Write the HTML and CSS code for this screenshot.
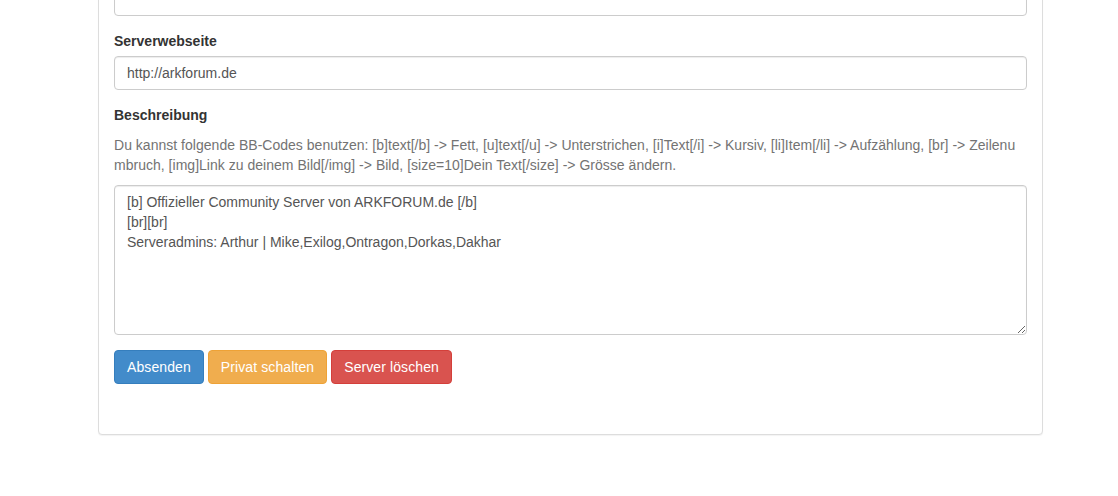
FILE: index.html
```html
<!DOCTYPE html>
<html lang="de">
<head>
  <meta charset="UTF-8">
  <meta name="viewport" content="width=device-width, initial-scale=1.0">
  <title>Server bearbeiten</title>
  <link rel="stylesheet" href="styles.css">
</head>
<body>
  <div class="panel">
    <div class="panel-body">
      <form id="server-form">
        <div class="form-group">
          <input type="text" class="form-control" id="servername" value="">
        </div>

        <div class="form-group">
          <label for="serverwebseite">Serverwebseite</label>
          <input type="text" class="form-control" id="serverwebseite" value="http://arkforum.de">
        </div>

        <div class="form-group">
          <label for="beschreibung">Beschreibung</label>
          <p class="help-block">Du kannst folgende BB-Codes benutzen: [b]text[/b] -&gt; Fett, [u]text[/u] -&gt; Unterstrichen, [i]Text[/i] -&gt; Kursiv, [li]Item[/li] -&gt; Aufzählung, [br] -&gt; Zeilenumbruch, [img]Link zu deinem Bild[/img] -&gt; Bild, [size=10]Dein Text[/size] -&gt; Grösse ändern.</p>
          <textarea class="form-control description" id="beschreibung">[b] Offizieller Community Server von ARKFORUM.de [/b]
[br][br]
Serveradmins: Arthur | Mike,Exilog,Ontragon,Dorkas,Dakhar</textarea>
        </div>

        <div class="form-actions">
          <button type="submit" class="btn btn-primary">Absenden</button>
          <button type="button" class="btn btn-warning">Privat schalten</button>
          <button type="button" class="btn btn-danger">Server löschen</button>
        </div>
      </form>
    </div>
  </div>
</body>
</html>
```

FILE: styles.css
```css
* {
  box-sizing: border-box;
}

body {
  margin: 0;
  background-color: #fff;
  color: #333;
  font-family: "Liberation Sans", Arial, sans-serif;
  font-size: 14px;
  line-height: 1.42857143;
}

/* the page is scrolled down a little, so the panel starts above the top edge */
.panel {
  width: 945px;
  margin: -34px 0 20px 98px;
  background-color: #fff;
  border: 1px solid #ddd;
  border-radius: 4px;
  box-shadow: 0 1px 1px rgba(0, 0, 0, 0.05);
}

.panel-body {
  padding: 15px;
}

.form-group {
  margin-bottom: 15px;
}

label {
  display: inline-block;
  max-width: 100%;
  margin-bottom: 5px;
  font-weight: bold;
}

.form-control {
  display: block;
  width: 100%;
  height: 34px;
  padding: 6px 12px;
  font-family: inherit;
  font-size: 14px;
  line-height: 1.42857143;
  color: #555;
  background-color: #fff;
  border: 1px solid #ccc;
  border-radius: 4px;
  box-shadow: inset 0 1px 1px rgba(0, 0, 0, 0.075);
}

.form-control:focus {
  outline: none;
  border-color: #66afe9;
}

.description {
  height: 150px;
  resize: vertical;
}

.help-block {
  display: block;
  margin: 5px 0 10px;
  padding-right: 4px;
  color: #737373;
  letter-spacing: 0.02px;
  word-break: break-all;
}

.form-actions {
  display: flex;
  gap: 4px;
  margin-bottom: 35px;
}

.btn {
  display: inline-block;
  padding: 6px 12px;
  font-family: inherit;
  font-size: 14px;
  line-height: 1.42857143;
  letter-spacing: 0.1px;
  color: #fff;
  border: 1px solid transparent;
  border-radius: 4px;
  cursor: pointer;
}

.btn-primary {
  background-color: #428bca;
  border-color: #357ebd;
}

.btn-warning {
  background-color: #f0ad4e;
  border-color: #eea236;
}

.btn-danger {
  background-color: #d9534f;
  border-color: #d43f3a;
}
```
